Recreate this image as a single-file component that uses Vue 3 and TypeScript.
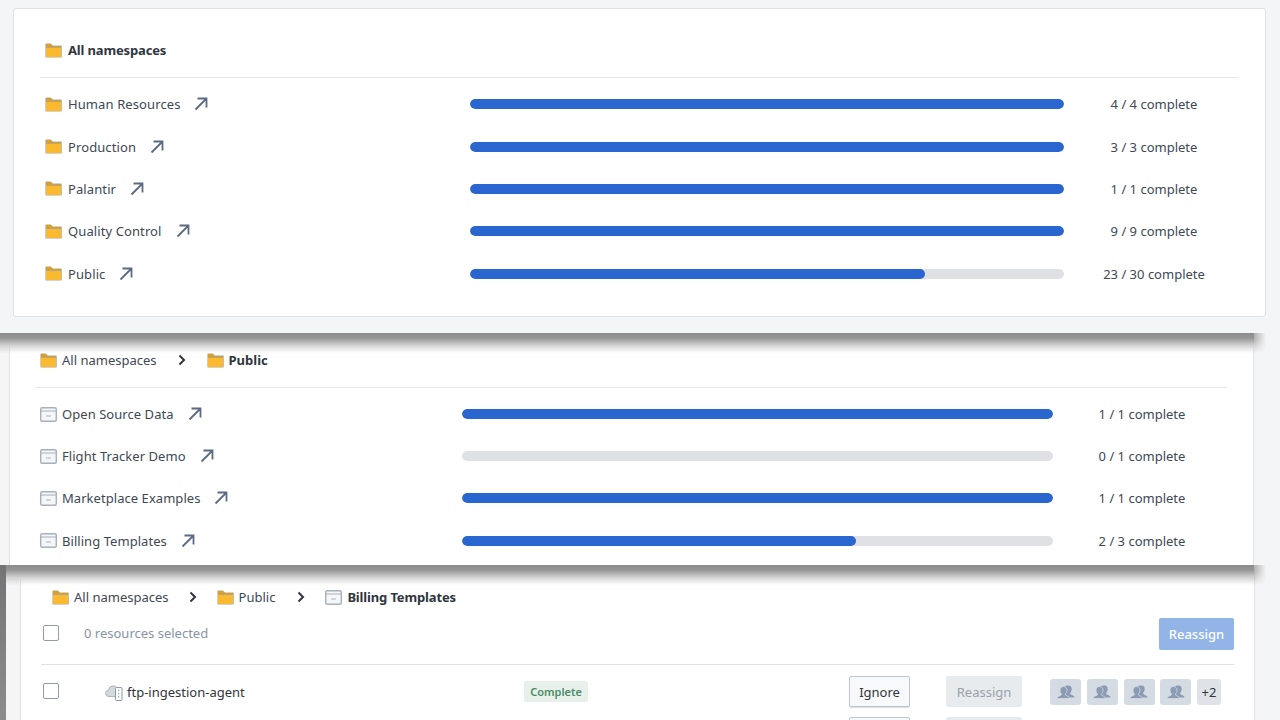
<script setup lang="ts">
interface Row { name: string; done: number; total: number }
const namespaces: Row[] = [
  { name: 'Human Resources', done: 4, total: 4 },
  { name: 'Production', done: 3, total: 3 },
  { name: 'Palantir', done: 1, total: 1 },
  { name: 'Quality Control', done: 9, total: 9 },
  { name: 'Public', done: 23, total: 30 },
]
const projects: Row[] = [
  { name: 'Open Source Data', done: 1, total: 1 },
  { name: 'Flight Tracker Demo', done: 0, total: 1 },
  { name: 'Marketplace Examples', done: 1, total: 1 },
  { name: 'Billing Templates', done: 2, total: 3 },
]
const pct = (r: Row) => `${(r.done / r.total) * 100}%`
const avatars = [1, 2, 3, 4]
</script>

<template>
  <div class="page">
    <section class="shot shot-a">
      <div class="card">
        <div class="head">
          <svg class="ico" viewBox="0 0 18 15" preserveAspectRatio="none"><path class="f-edge" d="M.5 14V1.2C.5.8.8.5 1.2.5h5l2 2h9c.3 0 .5.2.5.5v11c0 .3-.2.5-.5.5H1c-.3 0-.5-.2-.5-.5z"/><path class="f-tab" d="M1 4.2V1h5l2 2h9v1.2z"/><path class="f-body" d="M1 5h16v9H1z"/></svg>
          <strong>All namespaces</strong>
        </div>
        <div class="rows">
          <div v-for="r in namespaces" :key="r.name" class="row">
            <div class="name">
              <svg class="ico" viewBox="0 0 18 15" preserveAspectRatio="none"><path class="f-edge" d="M.5 14V1.2C.5.8.8.5 1.2.5h5l2 2h9c.3 0 .5.2.5.5v11c0 .3-.2.5-.5.5H1c-.3 0-.5-.2-.5-.5z"/><path class="f-tab" d="M1 4.2V1h5l2 2h9v1.2z"/><path class="f-body" d="M1 5h16v9H1z"/></svg>
              <span>{{ r.name }}</span>
              <svg class="arrow" viewBox="0 0 14 14"><path d="M1.5 12.5 12 2M3.5 1.5H12.5V10.5"/></svg>
            </div>
            <div class="track"><div class="fill" :style="{ width: pct(r) }"></div></div>
            <div class="status">{{ r.done }} / {{ r.total }} complete</div>
          </div>
        </div>
      </div>
    </section>

    <section class="shot shot-b">
      <div class="card">
        <div class="head">
          <svg class="ico" viewBox="0 0 18 15" preserveAspectRatio="none"><path class="f-edge" d="M.5 14V1.2C.5.8.8.5 1.2.5h5l2 2h9c.3 0 .5.2.5.5v11c0 .3-.2.5-.5.5H1c-.3 0-.5-.2-.5-.5z"/><path class="f-tab" d="M1 4.2V1h5l2 2h9v1.2z"/><path class="f-body" d="M1 5h16v9H1z"/></svg>
          <span>All namespaces</span>
          <svg class="chev" viewBox="0 0 8 12"><path d="M1.5 1.5 6 6l-4.500 4.500"/></svg>
          <svg class="ico" viewBox="0 0 18 15" preserveAspectRatio="none"><path class="f-edge" d="M.5 14V1.2C.5.8.8.5 1.2.5h5l2 2h9c.3 0 .5.2.5.5v11c0 .3-.2.5-.5.5H1c-.3 0-.5-.2-.5-.5z"/><path class="f-tab" d="M1 4.2V1h5l2 2h9v1.2z"/><path class="f-body" d="M1 5h16v9H1z"/></svg>
          <strong>Public</strong>
        </div>
        <div class="rows">
          <div v-for="r in projects" :key="r.name" class="row">
            <div class="name">
              <svg class="ico" viewBox="0 0 18 15" preserveAspectRatio="none"><rect class="p-box" x=".75" y=".75" width="16.500" height="13.500" rx="1.500"/><path class="p-line" d="M1 4h16M6.500 9h5"/></svg>
              <span>{{ r.name }}</span>
              <svg class="arrow" viewBox="0 0 14 14"><path d="M1.5 12.5 12 2M3.5 1.5H12.5V10.5"/></svg>
            </div>
            <div class="track"><div class="fill" :style="{ width: pct(r) }"></div></div>
            <div class="status">{{ r.done }} / {{ r.total }} complete</div>
          </div>
        </div>
      </div>
      <div class="shade"></div>
    </section>

    <section class="shot shot-c">
      <div class="strip"></div>
      <div class="card">
        <div class="head">
          <svg class="ico" viewBox="0 0 18 15" preserveAspectRatio="none"><path class="f-edge" d="M.5 14V1.2C.5.8.8.5 1.2.5h5l2 2h9c.3 0 .5.2.5.5v11c0 .3-.2.5-.5.5H1c-.3 0-.5-.2-.5-.5z"/><path class="f-tab" d="M1 4.2V1h5l2 2h9v1.2z"/><path class="f-body" d="M1 5h16v9H1z"/></svg>
          <span>All namespaces</span>
          <svg class="chev" viewBox="0 0 8 12"><path d="M1.5 1.5 6 6l-4.500 4.500"/></svg>
          <svg class="ico" viewBox="0 0 18 15" preserveAspectRatio="none"><path class="f-edge" d="M.5 14V1.2C.5.8.8.5 1.2.5h5l2 2h9c.3 0 .5.2.5.5v11c0 .3-.2.5-.5.5H1c-.3 0-.5-.2-.5-.5z"/><path class="f-tab" d="M1 4.2V1h5l2 2h9v1.2z"/><path class="f-body" d="M1 5h16v9H1z"/></svg>
          <span class="crumb-mid">Public</span>
          <svg class="chev" viewBox="0 0 8 12"><path d="M1.5 1.5 6 6l-4.500 4.500"/></svg>
          <svg class="ico" viewBox="0 0 18 15" preserveAspectRatio="none"><rect class="p-box" x=".75" y=".75" width="16.500" height="13.500" rx="1.500"/><path class="p-line" d="M1 4h16M6.500 9h5"/></svg>
          <strong>Billing Templates</strong>
        </div>
        <div class="toolbar">
          <span class="check"></span>
          <span class="count">0 resources selected</span>
          <button class="primary" type="button">Reassign</button>
        </div>
        <div class="resource first">
          <span class="check"></span>
          <div class="res-name">
            <svg class="cloud" viewBox="0 0 18 18">
              <path class="cl" d="M4 13.500a3.200 3.200 0 0 1-.4-6.400A4.700 4.700 0 0 1 12.500 5.500h1v8z"/>
              <rect class="srv" x="10.500" y="4.500" width="6.500" height="13" rx="1"/>
              <path class="dot" d="M13.700 7v1.500M13.700 10v1.500M13.700 13v1.500"/>
            </svg>
            <span>ftp-ingestion-agent</span>
          </div>
          <span class="tag">Complete</span>
          <button class="ignore" type="button">Ignore</button>
          <button class="off" type="button">Reassign</button>
          <div class="people">
            <span v-for="a in avatars" :key="a" class="person">
              <svg viewBox="0 0 20 16"><path class="pb" d="M12.500 1.500c2 0 3.200 1.500 3.200 3.500s-1 3.500-1.700 4c0 1 .5 1.300 2 1.900 1.300.5 2.500 1 2.500 2.600h-7.500c0-1.800-1.500-2.700-3-3.200.5-.5.7-1 .7-1.300-.8-.6-1.700-2.400-1.700-4 0-2 2-3.500 5-3.500z"/><path class="pa" d="M7.500 2.500c2.200 0 3.500 1.600 3.500 3.600s-1 3.300-1.700 3.900c0 1 .5 1.400 2 2 1.300.500 2.200 1 2.200 2.500H1c0-1.500 1-2 2.300-2.500 1.500-.6 2.200-1 2.200-2-.7-.6-1.500-1.900-1.500-3.900s1.300-3.600 3.500-3.600z"/></svg>
            </span>
            <span class="more">+2</span>
          </div>
        </div>
        <div class="resource">
          <span class="check"></span>
          <div class="res-name"></div>
          <span class="tag blank"></span>
          <button class="ignore" type="button"></button>
          <button class="off" type="button"></button>
          <div class="people">
            <span v-for="a in avatars" :key="a" class="person"></span>
            <span class="more"></span>
          </div>
        </div>
      </div>
      <div class="shade"></div>
    </section>
  </div>
</template>

<style scoped>
.page, .page * { box-sizing: border-box; }
.page {
  width: 1280px;
  height: 720px;
  overflow: hidden;
  display: flex;
  flex-direction: column;
  background: #f4f5f7;
  font-family: "Noto Sans", "Liberation Sans", sans-serif;
  font-size: 13px;
  color: #404854;
}
.shot {
  position: relative;
  overflow: hidden;
  flex: none;
  background: #f4f5f7;
}
.shot-a { height: 333px; padding: 8px 14px 0 13px; }
.shot-b { height: 232px; padding: 0 26px 0 9px; }
.shot-c { height: 155px; padding: 0 25px 0 20px; }

.card {
  background: #fff;
  border: 1px solid #dfe1e5;
  border-radius: 3px;
}
.shot-a .card { height: 309px; padding: 0 27px 0 26px; }
.shot-b .card { height: 240px; border-top: 0; border-radius: 0; padding: 0 26px 0 25px; }
.shot-c .card { height: 200px; border-top: 0; border-radius: 0; padding: 0 20px; }

.shade {
  position: absolute;
  top: 0;
  left: 0;
  width: 1254px;
  height: 20px;
  background: linear-gradient(#8c8c8c 0, #969696 25%, #d2d2d2 62%, rgba(255, 255, 255, 0) 100%);
}
.shade::after {
  content: "";
  position: absolute;
  top: 0;
  left: 100%;
  width: 12px;
  height: 20px;
  background: linear-gradient(90deg, #b0b0b0, rgba(244, 245, 247, 0));
  -webkit-mask-image: linear-gradient(#000 30%, transparent);
  mask-image: linear-gradient(#000 30%, transparent);
}
.strip {
  position: absolute;
  z-index: 1;
  left: 0;
  top: 0;
  bottom: 0;
  width: 6px;
  background: linear-gradient(#747474, #8c8c8c);
}

.head {
  display: flex;
  align-items: center;
  padding-left: 5px;
  color: #2f3640;
}
.shot-a .head { height: 69px; padding-top: 14px; border-bottom: 1px solid #e3e5e8; }
.shot-b .head { height: 55px; border-bottom: 1px solid #e3e5e8; }
.shot-c .head { height: 64px; padding-left: 11px; }
.head strong { font-weight: 700; letter-spacing: -.15px; }
.shot-b .head strong { letter-spacing: 0; }
.head span { color: #404854; }
.head .crumb-mid { margin-right: 2px; }
.ico { width: 17px; height: 15px; flex: none; margin-right: 6px; }
.shot-b .ico, .shot-c .ico { margin-right: 5px; }
.f-edge { fill: #aaa699; }
.f-tab { fill: #d99f2b; }
.f-body { fill: #fbb92f; }
.p-box { fill: #f4f6f8; stroke: #a7b0bb; stroke-width: 1.5; }
.p-line { fill: none; stroke: #a7b0bb; stroke-width: 1; }
.chev {
  width: 8px;
  height: 12px;
  margin: 0 20px;
  flex: none;
}
.shot-b .chev { margin: 0 21px; }
.chev path { fill: none; stroke: #2f3640; stroke-width: 2; }

.rows { padding-top: 5px; }
.row {
  display: flex;
  align-items: center;
  height: 42.4px;
}
.shot-b .row { height: 42.2px; }
.name {
  display: flex;
  align-items: center;
  flex: none;
  padding-left: 5px;
  letter-spacing: .1px;
}
.shot-a .name { width: 430px; }
.shot-b .name { width: 427px; letter-spacing: .05px; }
.arrow { width: 14px; height: 14px; margin-left: 14px; flex: none; }
.arrow path { fill: none; stroke: #5c6b82; stroke-width: 1.8; }
.track {
  height: 10px;
  border-radius: 5px;
  background: #dfe1e5;
  overflow: hidden;
  flex: none;
}
.shot-a .track { width: 594px; }
.shot-b .track { width: 591px; }
.fill { height: 100%; border-radius: 5px; background: #2a66cf; }
.status { flex: 1; text-align: center; white-space: nowrap; }
.shot-a .status { padding-left: 6px; }
.shot-b .status { padding-left: 4px; }

.toolbar {
  display: flex;
  align-items: center;
  height: 49px;
  margin-top: -13px;
  border-bottom: 1px solid #dfe3e8;
  padding-bottom: 14px;
}
.check {
  width: 16px;
  height: 16px;
  margin-left: 2px;
  border: 1.500px solid #8f9bb0;
  border-radius: 2px;
  background: #fff;
  display: block;
  flex: none;
}
.resource .check { margin-top: -1px; }
.count { margin-left: 25px; color: #8794a5; }
.primary {
  margin-left: auto;
  margin-top: 2px;
  width: 75px;
  height: 32px;
  border: 0;
  border-radius: 2px;
  background: #93b4e6;
  color: #fff;
  font: inherit;
  font-weight: 500;
}
.resource {
  display: flex;
  align-items: center;
  height: 41px;
}
.resource.first { margin-top: 6px; }
.res-name {
  display: flex;
  align-items: center;
  gap: 4px;
  width: 419px;
  margin-left: 46px;
  flex: none;
  color: #2f3640;
}
.cloud { width: 18px; height: 18px; }
.cl { fill: #d5d9de; stroke: #aeb4bc; stroke-width: 1; }
.srv { fill: #fff; stroke: #8f98a3; stroke-width: 1; }
.dot { fill: none; stroke: #62bb9a; stroke-width: 1; }
.tag {
  width: 64px;
  height: 21px;
  line-height: 21px;
  text-align: center;
  font-size: 11px;
  font-weight: 600;
  border-radius: 2px;
  background: #e7f1ea;
  color: #4a8a67;
  flex: none;
}
.tag.blank { background: transparent; }
.ignore {
  width: 61px;
  height: 31px;
  margin-left: 261px;
  border: 1px solid #c2c6cc;
  border-radius: 2px;
  background: #f8f9fa;
  font: inherit;
  color: #2f3640;
  box-shadow: 0 1px 1px rgba(16, 22, 26, .15);
  flex: none;
}
.off {
  width: 76px;
  height: 31px;
  margin-left: 36px;
  border: 0;
  border-radius: 2px;
  background: #e8ebee;
  color: #98a1ac;
  font: inherit;
  flex: none;
}
.people {
  display: flex;
  gap: 5.75px;
  margin-left: 28px;
}
.person {
  width: 31px;
  height: 26px;
  border-radius: 3px;
  background: #d5dbe3;
  display: flex;
  align-items: center;
  justify-content: center;
}
.person svg { width: 20px; height: 16px; }
.pa { fill: #8a9bb3; stroke: #d5dbe3; stroke-width: .8; }
.pb { fill: #8a9bb3; }
.more {
  width: 24px;
  height: 26px;
  line-height: 26px;
  text-align: center;
  border-radius: 3px;
  background: #dfe2e7;
  color: #2f3640;
}
</style>

<style>
html, body { margin: 0; background: #f4f5f7; }
</style>
